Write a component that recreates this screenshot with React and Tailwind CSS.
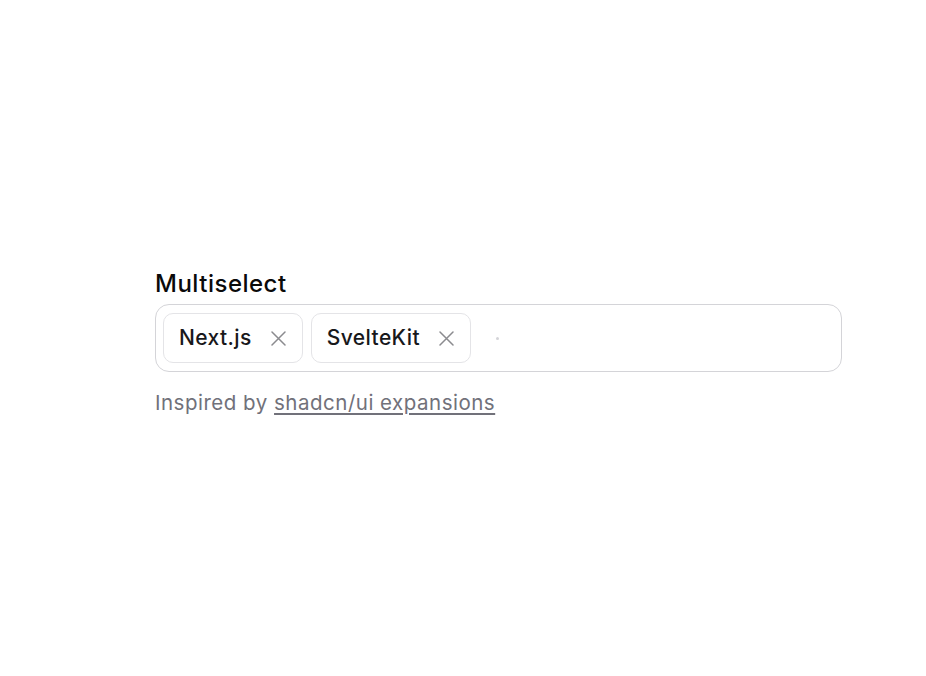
const SELECTED = ['Next.js', 'SvelteKit'];

const Cross = () => (
  <svg width="15" height="15" viewBox="0 0 15 15" className="ml-[19px] shrink-0" fill="none" stroke="#8b8b8f" strokeWidth="1.5" strokeLinecap="round">
    <path d="M1 1 14 14M14 1 1 14" />
  </svg>
);

export default function App() {
  return (
    <div className="min-h-screen bg-white pt-[268px] pl-[155px]" style={{ fontFamily: 'Inter, "Liberation Sans", sans-serif' }}>
      <div className="w-[687px]">
        <h1 className="text-[24px] leading-[32px] font-medium text-[#0a0a0a] tracking-[0.5px]">Multiselect</h1>

        {/* Field */}
        <div className="mt-1 flex items-center gap-2 h-[68px] px-[7px] rounded-[14px] border border-[#d4d4d8]">
          {SELECTED.map((item) => (
            <div key={item} className="flex items-center h-[50px] pl-[15px] pr-[16px] rounded-[10px] border border-[#e4e4e7]">
              <span className="text-[21px] font-medium text-[#18181b] tracking-[0.4px]">{item}</span>
              <Cross />
            </div>
          ))}
          <span className="ml-[17px] w-[3px] h-[3px] rounded-full bg-[#d4d4d8]" />
        </div>

        <p className="mt-[17px] text-[20.5px] leading-[28px] text-[#71717a] tracking-[0.5px]">
          Inspired by{' '}
          <a href="#" className="underline underline-offset-[3px]">shadcn/ui expansions</a>
        </p>
      </div>
    </div>
  );
}
